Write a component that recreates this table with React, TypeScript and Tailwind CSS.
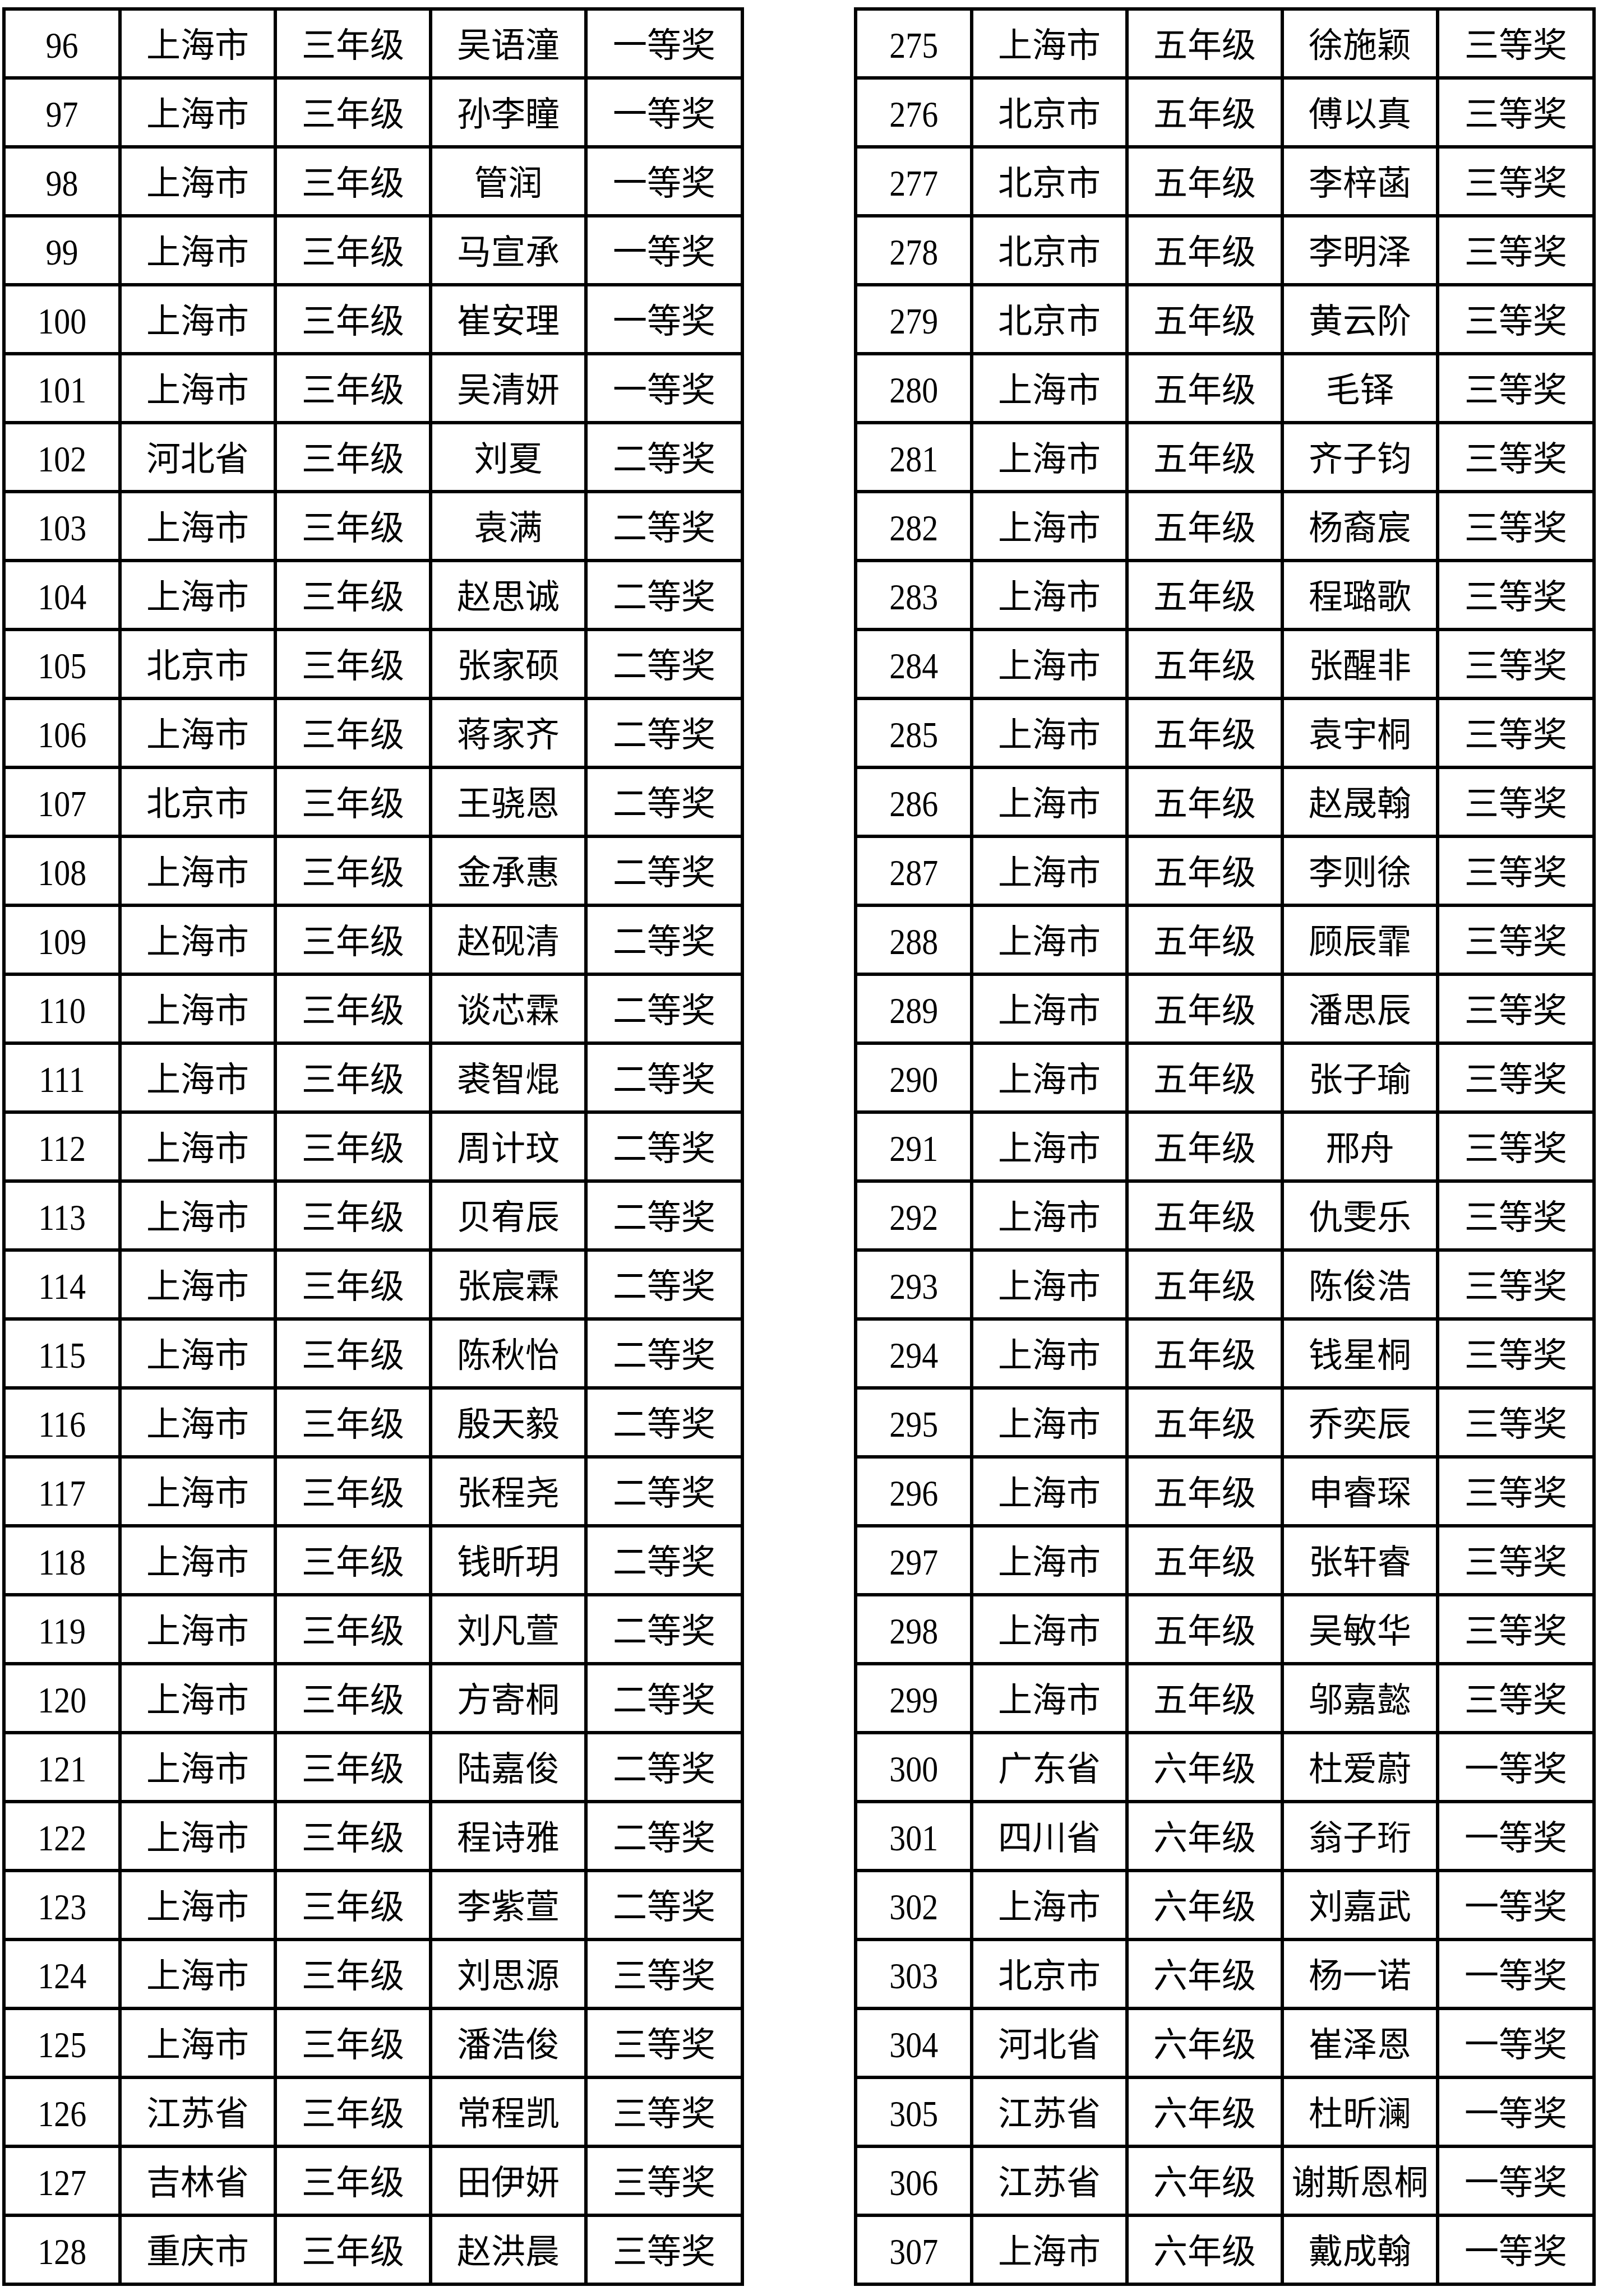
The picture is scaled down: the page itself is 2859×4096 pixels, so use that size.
const LEFT: string[][] = [
  ['96', '上海市', '三年级', '吴语潼', '一等奖'],
  ['97', '上海市', '三年级', '孙李瞳', '一等奖'],
  ['98', '上海市', '三年级', '管润', '一等奖'],
  ['99', '上海市', '三年级', '马宣承', '一等奖'],
  ['100', '上海市', '三年级', '崔安理', '一等奖'],
  ['101', '上海市', '三年级', '吴清妍', '一等奖'],
  ['102', '河北省', '三年级', '刘夏', '二等奖'],
  ['103', '上海市', '三年级', '袁满', '二等奖'],
  ['104', '上海市', '三年级', '赵思诚', '二等奖'],
  ['105', '北京市', '三年级', '张家硕', '二等奖'],
  ['106', '上海市', '三年级', '蒋家齐', '二等奖'],
  ['107', '北京市', '三年级', '王骁恩', '二等奖'],
  ['108', '上海市', '三年级', '金承惠', '二等奖'],
  ['109', '上海市', '三年级', '赵砚清', '二等奖'],
  ['110', '上海市', '三年级', '谈芯霖', '二等奖'],
  ['111', '上海市', '三年级', '裘智焜', '二等奖'],
  ['112', '上海市', '三年级', '周计玟', '二等奖'],
  ['113', '上海市', '三年级', '贝宥辰', '二等奖'],
  ['114', '上海市', '三年级', '张宸霖', '二等奖'],
  ['115', '上海市', '三年级', '陈秋怡', '二等奖'],
  ['116', '上海市', '三年级', '殷天毅', '二等奖'],
  ['117', '上海市', '三年级', '张程尧', '二等奖'],
  ['118', '上海市', '三年级', '钱昕玥', '二等奖'],
  ['119', '上海市', '三年级', '刘凡萱', '二等奖'],
  ['120', '上海市', '三年级', '方寄桐', '二等奖'],
  ['121', '上海市', '三年级', '陆嘉俊', '二等奖'],
  ['122', '上海市', '三年级', '程诗雅', '二等奖'],
  ['123', '上海市', '三年级', '李紫萱', '二等奖'],
  ['124', '上海市', '三年级', '刘思源', '三等奖'],
  ['125', '上海市', '三年级', '潘浩俊', '三等奖'],
  ['126', '江苏省', '三年级', '常程凯', '三等奖'],
  ['127', '吉林省', '三年级', '田伊妍', '三等奖'],
  ['128', '重庆市', '三年级', '赵洪晨', '三等奖'],
]

const RIGHT: string[][] = [
  ['275', '上海市', '五年级', '徐施颖', '三等奖'],
  ['276', '北京市', '五年级', '傅以真', '三等奖'],
  ['277', '北京市', '五年级', '李梓菡', '三等奖'],
  ['278', '北京市', '五年级', '李明泽', '三等奖'],
  ['279', '北京市', '五年级', '黄云阶', '三等奖'],
  ['280', '上海市', '五年级', '毛铎', '三等奖'],
  ['281', '上海市', '五年级', '齐子钧', '三等奖'],
  ['282', '上海市', '五年级', '杨裔宸', '三等奖'],
  ['283', '上海市', '五年级', '程璐歌', '三等奖'],
  ['284', '上海市', '五年级', '张醒非', '三等奖'],
  ['285', '上海市', '五年级', '袁宇桐', '三等奖'],
  ['286', '上海市', '五年级', '赵晟翰', '三等奖'],
  ['287', '上海市', '五年级', '李则徐', '三等奖'],
  ['288', '上海市', '五年级', '顾辰霏', '三等奖'],
  ['289', '上海市', '五年级', '潘思辰', '三等奖'],
  ['290', '上海市', '五年级', '张子瑜', '三等奖'],
  ['291', '上海市', '五年级', '邢舟', '三等奖'],
  ['292', '上海市', '五年级', '仇雯乐', '三等奖'],
  ['293', '上海市', '五年级', '陈俊浩', '三等奖'],
  ['294', '上海市', '五年级', '钱星桐', '三等奖'],
  ['295', '上海市', '五年级', '乔奕辰', '三等奖'],
  ['296', '上海市', '五年级', '申睿琛', '三等奖'],
  ['297', '上海市', '五年级', '张轩睿', '三等奖'],
  ['298', '上海市', '五年级', '吴敏华', '三等奖'],
  ['299', '上海市', '五年级', '邬嘉懿', '三等奖'],
  ['300', '广东省', '六年级', '杜爱蔚', '一等奖'],
  ['301', '四川省', '六年级', '翁子珩', '一等奖'],
  ['302', '上海市', '六年级', '刘嘉武', '一等奖'],
  ['303', '北京市', '六年级', '杨一诺', '一等奖'],
  ['304', '河北省', '六年级', '崔泽恩', '一等奖'],
  ['305', '江苏省', '六年级', '杜昕澜', '一等奖'],
  ['306', '江苏省', '六年级', '谢斯恩桐', '一等奖'],
  ['307', '上海市', '六年级', '戴成翰', '一等奖'],
]

function AwardTable({ rows }: { rows: string[][] }) {
  return (
    <div className="grid w-[1323px] shrink-0 grid-cols-[201px_271px_271px_271px_273px] auto-rows-[117px] gap-[6px] bg-black p-[6px]">
      {rows.map((row) =>
        row.map((cell, i) => (
          <div
            key={row[0] + '-' + i}
            className="flex items-center justify-center bg-white pt-[7px] text-[61px] leading-none text-black"
          >
            {i === 0 ? (
              <span className="inline-block scale-x-[0.95] scale-y-[1.06]">{cell}</span>
            ) : (
              <span className="whitespace-nowrap">{cell}</span>
            )}
          </div>
        ))
      )}
    </div>
  )
}

export default function App() {
  return (
    <div className="flex h-[4096px] w-[2859px] items-start gap-[196px] bg-white pl-[4px] pt-[13px] font-['Liberation_Serif','Noto_Sans_CJK_SC',serif]">
      <AwardTable rows={LEFT} />
      <AwardTable rows={RIGHT} />
    </div>
  )
}
